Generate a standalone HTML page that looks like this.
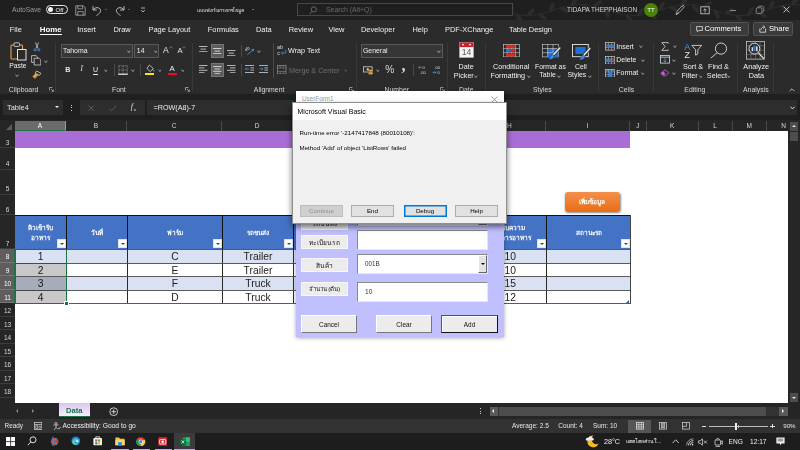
<!DOCTYPE html>
<html lang="th">
<head>
<meta charset="utf-8">
<title>Excel - Microsoft Visual Basic</title>
<style>
*{box-sizing:border-box;margin:0;padding:0}
html,body{width:800px;height:450px;overflow:hidden;background:#1f1f1f}
body{position:relative;font-family:"Liberation Sans","Noto Sans CJK SC",sans-serif;font-size:7px;color:#fff;line-height:1}
.a{position:absolute;white-space:nowrap}
.c{text-align:center}
/* ---------- title bar ---------- */
#title{left:0;top:0;width:800px;height:20px;background:#1f1f1f}
#tabs{left:0;top:20px;width:800px;height:18px;background:#2b2b2b}
#ribbon{left:0;top:38px;width:800px;height:56px;background:#2b2b2b}
#fbar{left:0;top:94px;width:800px;height:26px;background:#1f1f1f}
.fbox{background:#2d2d2d;top:100px;height:15px}
/* ---------- grid ---------- */
#colhdr{left:0;top:120px;width:800px;height:11px;background:#262626}
#rowhdr{left:0;top:131px;width:15px;height:272px;background:#262626}
#sheet{left:15px;top:131px;width:773px;height:272px;background:#fff}
.ch{top:121.2px;height:9.6px;font-size:6.5px;color:#d6d6d6;text-align:center;line-height:9px;border-right:1px solid #4a4a4a}
.rh{left:0;width:15px;font-size:6.5px;color:#d6d6d6;text-align:center;border-bottom:1px solid #3c3c3c}
/* ---------- table ---------- */
.th{background:#4472c4;top:215px;height:34px;border-left:1px solid #111;border-top:1px solid #111;color:#fff;font-weight:bold;font-size:6.5px;text-align:center;overflow:hidden}
.dd{position:absolute;right:0.5px;bottom:1.2px;width:9px;height:9.2px;background:#fbfbfb;border:0.5px solid #e2e2e2}
.dd:after{content:"";position:absolute;left:2px;top:3.2px;border-left:2.2px solid transparent;border-right:2.2px solid transparent;border-top:2.5px solid #444}
.td{color:#222;font-size:10.3px;text-align:center;border-left:1px solid #2a2a2a;border-top:1px solid #5a5a5a;height:14px;line-height:13px}
.bl{background:#d9e1f2}
.wh{background:#fff}
/* ---------- status ---------- */
#sheettabs{left:0;top:403px;width:800px;height:16px;background:#252525}
#status{left:0;top:419px;width:800px;height:13.5px;background:#323232}
#taskbar{left:0;top:432.5px;width:800px;height:17.5px;background:#1d1d1d}
/* ---------- dialogs ---------- */
.lbl{background:#ececec;left:301px;width:47px;height:14px;overflow:hidden;color:#111;font-size:6.6px;text-align:center;line-height:13px;border:1px solid #f8f8f8}
.tb{background:#fff;left:357px;width:131px;border:1px solid #8a8a8a;border-right-color:#e8e8e8;border-bottom-color:#e8e8e8;color:#333;font-size:6px}
.fb{background:#ececec;top:314.5px;height:18.5px;color:#111;font-size:6.4px;text-align:center;line-height:18.5px;border:1px solid #fff;border-right-color:#777;border-bottom-color:#777}
.mb{top:205px;height:12px;width:43px;background:#e1e1e1;border:1px solid #adadad;color:#000;font-size:6.2px;text-align:center;line-height:10px}
</style>
</head>
<body>
<!-- ================= TITLE BAR ================= -->
<div id="title" class="a"></div>
<div id="tabs" class="a"></div>
<div id="ribbon" class="a"></div>
<div id="fbar" class="a"></div>

<!-- title + tabs content -->
<svg class="a" style="left:500px;top:0px" width="300" height="20" viewBox="0 0 300 20"><g fill="#2c2c2c" stroke="none"><path d="M0 10.0 L4 11.3 L8 12.5 L12 13.6 L16 14.4 L20 15.1 L24 15.4 L28 15.5 L32 15.2 L36 14.7 L40 13.9 L44 12.9 L48 11.7 L52 10.5 L56 9.2 L60 7.9 L64 6.8 L68 5.8 L72 5.1 L76 4.7 L80 4.5 L84 4.6 L88 5.1 L92 5.8 L96 6.7 L100 7.9 L104 9.1 L108 10.4 L112 11.7 L116 12.8 L120 13.9 L124 14.7 L128 15.2 L132 15.5 L136 15.4 L140 15.1 L144 14.5 L148 13.6 L152 12.6 L156 11.4 L160 10.1 L164 8.8 L168 7.6 L172 6.5 L176 5.6 L180 5.0 L184 4.6 L188 4.5 L192 4.7 L196 5.3 L200 6.0 L204 7.0 L208 8.2 L212 9.5 L216 10.8 L220 12.0 L224 13.2 L228 14.1 L232 14.9 L236 15.3 L240 15.5 L244 15.4 L248 14.9 L252 14.3 L256 13.3 L260 12.2 L264 11.0 L268 9.7 L272 8.4 L276 7.2 L280 6.2 L284 5.4 L288 4.8 L292 4.5 L296 4.5 L300 4.9" fill="none" stroke="#2c2c2c" stroke-width="1.1"/><ellipse cx="9.6" cy="9.7" rx="5" ry="2.1" transform="rotate(-31 9.6 9.7)"/><ellipse cx="19.2" cy="18.2" rx="5" ry="2.1" transform="rotate(58 19.2 18.2)"/><ellipse cx="30.7" cy="12.3" rx="5" ry="2.1" transform="rotate(-49 30.7 12.3)"/><ellipse cx="42.4" cy="16.6" rx="5" ry="2.1" transform="rotate(36 42.4 16.6)"/><ellipse cx="51.7" cy="7.3" rx="5" ry="2.1" transform="rotate(-66 51.7 7.3)"/><ellipse cx="64.6" cy="9.8" rx="5" ry="2.1" transform="rotate(32 64.6 9.8)"/><ellipse cx="74.3" cy="1.6" rx="5" ry="2.1" transform="rotate(-56 74.3 1.6)"/><ellipse cx="85.6" cy="7.8" rx="5" ry="2.1" transform="rotate(51 85.6 7.8)"/><ellipse cx="97.5" cy="3.8" rx="5" ry="2.1" transform="rotate(-35 97.5 3.8)"/><ellipse cx="106.7" cy="13.2" rx="5" ry="2.1" transform="rotate(66 106.7 13.2)"/><ellipse cx="119.5" cy="10.6" rx="5" ry="2.1" transform="rotate(-32 119.5 10.6)"/><ellipse cx="129.4" cy="18.5" rx="5" ry="2.1" transform="rotate(55 129.4 18.5)"/><ellipse cx="140.5" cy="12.0" rx="5" ry="2.1" transform="rotate(-53 140.5 12.0)"/><ellipse cx="152.5" cy="15.7" rx="5" ry="2.1" transform="rotate(34 152.5 15.7)"/><ellipse cx="161.7" cy="6.2" rx="5" ry="2.1" transform="rotate(-66 161.7 6.2)"/><ellipse cx="174.5" cy="9.1" rx="5" ry="2.1" transform="rotate(33 174.5 9.1)"/><ellipse cx="184.5" cy="1.4" rx="5" ry="2.1" transform="rotate(-53 184.5 1.4)"/><ellipse cx="195.4" cy="8.3" rx="5" ry="2.1" transform="rotate(54 195.4 8.3)"/><ellipse cx="207.5" cy="4.8" rx="5" ry="2.1" transform="rotate(-33 207.5 4.8)"/><ellipse cx="216.7" cy="14.3" rx="5" ry="2.1" transform="rotate(66 216.7 14.3)"/><ellipse cx="229.5" cy="11.3" rx="5" ry="2.1" transform="rotate(-34 229.5 11.3)"/><ellipse cx="239.6" cy="18.7" rx="5" ry="2.1" transform="rotate(52 239.6 18.7)"/><ellipse cx="250.3" cy="11.5" rx="5" ry="2.1" transform="rotate(-56 250.3 11.5)"/><ellipse cx="262.6" cy="14.7" rx="5" ry="2.1" transform="rotate(32 262.6 14.7)"/><ellipse cx="271.7" cy="5.2" rx="5" ry="2.1" transform="rotate(-66 271.7 5.2)"/><ellipse cx="284.4" cy="8.4" rx="5" ry="2.1" transform="rotate(36 284.4 8.4)"/><ellipse cx="294.7" cy="1.3" rx="5" ry="2.1" transform="rotate(-50 294.7 1.3)"/></g></svg>
<div class="a" style="left:12.0px;top:7.25px;font-size:6.7px;color:#9d9d9d;">AutoSave</div>
<div class="a" style="left:45.5px;top:5.2px;width:22.5px;height:8.8px;border:1px solid #e8e8e8;border-radius:4.4px"></div>
<div class="a" style="left:47.6px;top:7px;width:5.2px;height:5.2px;border-radius:2.6px;background:#f4f4f4"></div>
<div class="a" style="left:55.5px;top:7.02px;font-size:6.0px;color:#f0f0f0;">Off</div>
<svg class="a" style="left:75px;top:4.8px" width="11" height="11" viewBox="0 0 11 11"><path d="M0.8 0.8H8.4L10.2 2.6V10.2H0.8Z" fill="none" stroke="#c4c4c4" stroke-width="0.7"/><path d="M2.8 0.8V3.8H7.6V0.8M2.8 10.2V6.6H8.2V10.2" fill="none" stroke="#c4c4c4" stroke-width="0.65"/></svg>
<svg class="a" style="left:92.0px;top:4.5px" width="10" height="11" viewBox="0 0 10 11"><path d="M1 1.2V5H4.8" fill="none" stroke="#cfcfcf" stroke-width="0.9"/><path d="M1.2 4.8C3 2 7 2 8.3 4.5C9.3 6.8 7.5 8.5 4.5 10.5" fill="none" stroke="#cfcfcf" stroke-width="0.9"/></svg>
<div class="a" style="left:105.1px;top:9.2px;width:0;height:0;border-left:1.6px solid transparent;border-right:1.6px solid transparent;border-top:1.8px solid #9a9a9a"></div>
<svg class="a" style="left:115.0px;top:4.5px" width="10" height="11" viewBox="0 0 10 11"><path d="M9 1.2V5H5.2" fill="none" stroke="#cfcfcf" stroke-width="0.9"/><path d="M8.8 4.8C7 2 3 2 1.7 4.5C0.7 6.8 2.5 8.5 5.5 10.5" fill="none" stroke="#cfcfcf" stroke-width="0.9"/></svg>
<div class="a" style="left:128.0px;top:9.2px;width:0;height:0;border-left:1.6px solid transparent;border-right:1.6px solid transparent;border-top:1.8px solid #9a9a9a"></div>
<svg class="a" style="left:139.5px;top:6.6px" width="6" height="6" viewBox="0 0 6 6"><path d="M1 1H5" stroke="#cfcfcf" stroke-width="0.8"/><path d="M1.2 3L3 5L4.8 3" stroke="#cfcfcf" stroke-width="0.8" fill="none"/></svg>
<div class="a c" style="left:189px;top:6.4px;width:62px;height:8px;overflow:hidden;font-size:5.2px;line-height:8px;color:#e0e0e0">แบบฟอร์มกรอกข้อมูล</div>
<div class="a" style="left:252.2px;top:9.2px;width:0;height:0;border-left:1.6px solid transparent;border-right:1.6px solid transparent;border-top:1.8px solid #bdbdbd"></div>
<div class="a" style="left:297px;top:3.4px;width:216px;height:13px;border:1px solid #484848;background:#1f1f1f"></div>
<svg class="a" style="left:309.0px;top:5.5px" width="8" height="9" viewBox="0 0 8 9"><circle cx="4.8" cy="3.4" r="2.6" fill="none" stroke="#7a7a7a" stroke-width="0.8"/><path d="M3 5.4L0.6 8.2" stroke="#7a7a7a" stroke-width="0.8"/></svg>
<div class="a" style="left:326.0px;top:6.74px;font-size:6.9px;color:#6a6a6a;">Search (Alt+Q)</div>
<div class="a" style="left:567.0px;top:6.98px;font-size:6.45px;color:#d4d4d4;">TIDAPA THEPPHAISON</div>
<div class="a c" style="left:644px;top:2.7px;width:14.2px;height:14.2px;border-radius:7.1px;background:#498205;color:#fff;font-size:6.2px;line-height:14.2px">TT</div>
<svg class="a" style="left:673.5px;top:4.0px" width="11" height="12" viewBox="0 0 11 12"><path d="M2 10.5L3.2 7.2L8 1.8L9.8 3.5L5 8.8Z" fill="none" stroke="#bdbdbd" stroke-width="0.8"/><path d="M2 10.5L5 8.8" stroke="#bdbdbd" stroke-width="0.8"/><path d="M8.6 0.6L10.8 2.6" stroke="#bdbdbd" stroke-width="0.7"/></svg>
<svg class="a" style="left:700.0px;top:5.5px" width="10" height="9" viewBox="0 0 10 9"><rect x="0.8" y="0.8" width="8.4" height="7" fill="none" stroke="#cfcfcf" stroke-width="0.8"/><path d="M5 6.5V3M3.4 4.4L5 2.8L6.6 4.4" stroke="#cfcfcf" stroke-width="0.8" fill="none"/></svg>
<div class="a" style="left:729.5px;top:9.6px;width:6.0px;height:0.8px;background:#8a8a8a;"></div>
<svg class="a" style="left:755.0px;top:5.0px" width="10" height="10" viewBox="0 0 10 10"><rect x="1.2" y="2.8" width="5.8" height="5.8" rx="1.2" fill="none" stroke="#9a9a9a" stroke-width="0.8"/><path d="M3 2.8C3 1.6 3.6 1.2 4.6 1.2H7.2C8.2 1.2 8.8 1.8 8.8 2.8V5.4C8.8 6.4 8.2 7 7 7" fill="none" stroke="#9a9a9a" stroke-width="0.8"/></svg>
<svg class="a" style="left:783.0px;top:6.3px" width="7" height="7" viewBox="0 0 7 7"><path d="M0.5 0.5L6.5 6.5M6.5 0.5L0.5 6.5" stroke="#e0e0e0" stroke-width="0.8"/></svg>
<div class="a" style="left:9.8px;top:25.95px;font-size:7.45px;color:#f0f0f0;">File</div>
<div class="a" style="left:77.3px;top:25.95px;font-size:7.45px;color:#f0f0f0;">Insert</div>
<div class="a" style="left:113.4px;top:25.95px;font-size:7.45px;color:#f0f0f0;">Draw</div>
<div class="a" style="left:148.5px;top:25.95px;font-size:7.45px;color:#f0f0f0;">Page Layout</div>
<div class="a" style="left:207.8px;top:25.95px;font-size:7.45px;color:#f0f0f0;">Formulas</div>
<div class="a" style="left:255.9px;top:25.95px;font-size:7.45px;color:#f0f0f0;">Data</div>
<div class="a" style="left:288.7px;top:25.95px;font-size:7.45px;color:#f0f0f0;">Review</div>
<div class="a" style="left:328.5px;top:25.95px;font-size:7.45px;color:#f0f0f0;">View</div>
<div class="a" style="left:361.0px;top:25.95px;font-size:7.45px;color:#f0f0f0;">Developer</div>
<div class="a" style="left:412.5px;top:25.95px;font-size:7.45px;color:#f0f0f0;">Help</div>
<div class="a" style="left:445.0px;top:25.95px;font-size:7.45px;color:#f0f0f0;">PDF-XChange</div>
<div class="a" style="left:509.0px;top:25.95px;font-size:7.45px;color:#f0f0f0;">Table Design</div>
<div class="a" style="left:39.8px;top:25.71px;font-size:7.9px;color:#fff;font-weight:bold;">Home</div>
<div class="a" style="left:39.8px;top:33.8px;width:22.0px;height:1.2px;background:#fff;"></div>
<div class="a" style="left:690px;top:22.3px;width:58.5px;height:13.5px;background:#3b3b3b;border:1px solid #545454;border-radius:1.5px"></div>
<svg class="a" style="left:695.5px;top:25.8px" width="7" height="7" viewBox="0 0 7 7"><path d="M0.6 0.6H6.4V4.4H3L1.6 5.8V4.4H0.6Z" fill="none" stroke="#e6e6e6" stroke-width="0.8"/></svg>
<div class="a" style="left:704.5px;top:25.17px;font-size:7.6px;color:#fff;">Comments</div>
<div class="a" style="left:753px;top:22.3px;width:40px;height:13.5px;background:#3b3b3b;border:1px solid #545454;border-radius:1.5px"></div>
<svg class="a" style="left:758.5px;top:25.3px" width="8" height="8" viewBox="0 0 8 8"><path d="M0.8 3.6V7.2H6.6V3.6" fill="none" stroke="#e6e6e6" stroke-width="0.8"/><path d="M2 4.8C2.4 2.8 3.6 2 5.4 2M4.2 0.6L5.8 2L4.2 3.4" fill="none" stroke="#e6e6e6" stroke-width="0.8"/></svg>
<div class="a" style="left:769.0px;top:25.17px;font-size:7.6px;color:#fff;">Share</div>
<!-- ribbon: clipboard/font/alignment -->
<svg class="a" style="left:9.5px;top:42.0px" width="17" height="19" viewBox="0 0 17 19"><rect x="1" y="3" width="11.5" height="14" rx="0.8" fill="none" stroke="#e3a04a" stroke-width="1.1"/>
<rect x="4" y="0.8" width="5.5" height="3.6" rx="0.8" fill="#2b2b2b" stroke="#d0d0d0" stroke-width="0.9"/>
<rect x="7.5" y="7.5" width="8.5" height="10.5" fill="#2b2b2b" stroke="#e6e6e6" stroke-width="1"/></svg>
<div class="a" style="left:9.3px;top:63.38px;font-size:6.75px;color:#f0f0f0;">Paste</div>
<svg class="a" style="left:14.7px;top:73.7px" width="4" height="3.4" viewBox="0 0 4 3.4"><path d="M0.5 0.6L2.0 2.6L3.5 0.6" stroke="#c8c8c8" stroke-width="0.7" fill="none"/></svg>
<svg class="a" style="left:32.5px;top:42px" width="8" height="10" viewBox="0 0 8 10"><path d="M2.4 0.4L5 6.4M5.6 0.4L3 6.4" stroke="#d8d8d8" stroke-width="0.75" fill="none"/><circle cx="2.2" cy="7.8" r="1.1" fill="none" stroke="#4a9be8" stroke-width="0.8"/><circle cx="5.8" cy="7.8" r="1.1" fill="none" stroke="#4a9be8" stroke-width="0.8"/></svg>
<svg class="a" style="left:30.8px;top:55.0px" width="10.5" height="10.5" viewBox="0 0 10.5 10.5"><path d="M0.6 0.6H5L6.5 2V7.4H0.6Z" fill="none" stroke="#d0d0d0" stroke-width="0.8"/><path d="M3.2 3.2H8L9.8 5V10H3.2Z" fill="#2b2b2b" stroke="#d0d0d0" stroke-width="0.8"/></svg>
<svg class="a" style="left:44.1px;top:59.5px" width="3.8" height="3.4" viewBox="0 0 3.8 3.4"><path d="M0.5 0.6L1.9 2.6L3.3 0.6" stroke="#c8c8c8" stroke-width="0.7" fill="none"/></svg>
<svg class="a" style="left:31.5px;top:70.0px" width="10" height="9" viewBox="0 0 10 9"><path d="M4.5 1L8.8 3.2L7.4 5.4L3.2 3.2Z" fill="none" stroke="#d8d8d8" stroke-width="0.8"/><path d="M3.6 3.6L0.8 6.4L3 8.4L6 5" fill="#e3a04a" stroke="#e3a04a" stroke-width="0.6"/></svg>
<div class="a" style="left:8.8px;top:86.54px;font-size:6.9px;color:#d8d8d8;">Clipboard</div>
<svg class="a" style="left:49.2px;top:86.8px" width="5" height="5" viewBox="0 0 5 5"><path d="M0.5 3.5V0.5H3.5" fill="none" stroke="#bdbdbd" stroke-width="0.7"/><path d="M2 2L4.2 4.2M4.4 2.6V4.4H2.6" fill="none" stroke="#bdbdbd" stroke-width="0.7"/></svg>
<div class="a" style="left:55.0px;top:43px;width:1px;height:49px;background:#383838"></div>
<div class="a" style="left:61.0px;top:44.2px;width:71.5px;height:13.6px;background:#363636;border:1px solid #5a5a5a"></div>
<div class="a" style="left:63.0px;top:48.24px;font-size:6.9px;color:#f0f0f0;">Tahoma</div>
<svg class="a" style="left:127.1px;top:49.9px" width="3.8" height="3.4" viewBox="0 0 3.8 3.4"><path d="M0.5 0.6L1.9 2.6L3.3 0.6" stroke="#c8c8c8" stroke-width="0.7" fill="none"/></svg>
<div class="a" style="left:134.0px;top:44.2px;width:25.0px;height:13.6px;background:#363636;border:1px solid #5a5a5a"></div>
<div class="a" style="left:136.8px;top:48.24px;font-size:6.9px;color:#f0f0f0;">14</div>
<svg class="a" style="left:153.6px;top:49.9px" width="3.8" height="3.4" viewBox="0 0 3.8 3.4"><path d="M0.5 0.6L1.9 2.6L3.3 0.6" stroke="#c8c8c8" stroke-width="0.7" fill="none"/></svg>
<div class="a" style="left:163.0px;top:46.44px;font-size:8.6px;color:#e6e6e6;">A</div>
<svg class="a" style="left:169.0px;top:46.0px" width="4" height="3" viewBox="0 0 4 3"><path d="M0.4 2.4L2 0.7L3.6 2.4" fill="none" stroke="#4a9be8" stroke-width="0.7"/></svg>
<div class="a" style="left:177.5px;top:47.47px;font-size:7.6px;color:#e6e6e6;">A</div>
<svg class="a" style="left:182.2px;top:46.0px" width="4" height="3" viewBox="0 0 4 3"><path d="M0.4 0.6L2 2.3L3.6 0.6" fill="none" stroke="#4a9be8" stroke-width="0.7"/></svg>
<div class="a" style="left:65.3px;top:65.78px;font-size:7.2px;color:#e6e6e6;font-weight:bold;">B</div>
<div class="a" style="left:80.6px;top:65.78px;font-size:7.2px;color:#e6e6e6;font-style:italic;font-family:'Liberation Serif',serif">I</div>
<div class="a" style="left:93.0px;top:65.69px;font-size:7.0px;color:#e6e6e6;">U</div>
<div class="a" style="left:93.0px;top:73.6px;width:5.0px;height:0.6px;background:#e6e6e6;"></div>
<svg class="a" style="left:103.6px;top:68.7px" width="3.8" height="3.4" viewBox="0 0 3.8 3.4"><path d="M0.5 0.6L1.9 2.6L3.3 0.6" stroke="#c8c8c8" stroke-width="0.7" fill="none"/></svg>
<div class="a" style="left:114.0px;top:63.5px;width:1px;height:12.5px;background:#4a4a4a"></div>
<svg class="a" style="left:117.5px;top:64.5px" width="10" height="10" viewBox="0 0 10 10"><path d="M0.8 0.8H9.2M0.8 0.8V9.2M9.2 0.8V9.2M5 0.8V9.2M0.8 5H9.2" stroke="#b0b0b0" stroke-width="0.6" stroke-dasharray="1.2 0.7" fill="none"/><path d="M0.3 9.2H9.7" stroke="#f4f4f4" stroke-width="1.2"/></svg>
<svg class="a" style="left:130.9px;top:68.7px" width="3.8" height="3.4" viewBox="0 0 3.8 3.4"><path d="M0.5 0.6L1.9 2.6L3.3 0.6" stroke="#c8c8c8" stroke-width="0.7" fill="none"/></svg>
<div class="a" style="left:140.0px;top:63.5px;width:1px;height:12.5px;background:#4a4a4a"></div>
<svg class="a" style="left:145.5px;top:63.5px" width="9" height="9" viewBox="0 0 9 9"><path d="M3.4 1L7.4 4.6L4.2 7.6L0.9 4.4Z" fill="none" stroke="#d8d8d8" stroke-width="0.8"/><path d="M7.6 5.2C8.6 6.4 8.6 7.2 7.8 7.6C7 7.2 7 6.4 7.6 5.2Z" fill="#4a9be8"/></svg>
<div class="a" style="left:145.0px;top:72.6px;width:9.0px;height:2.0px;background:#ffe600;"></div>
<svg class="a" style="left:157.7px;top:68.7px" width="3.8" height="3.4" viewBox="0 0 3.8 3.4"><path d="M0.5 0.6L1.9 2.6L3.3 0.6" stroke="#c8c8c8" stroke-width="0.7" fill="none"/></svg>
<div class="a" style="left:169.4px;top:64.55px;font-size:7.8px;color:#f0f0f0;">A</div>
<div class="a" style="left:167.5px;top:72.6px;width:9.5px;height:2.0px;background:#e81123;"></div>
<svg class="a" style="left:180.7px;top:68.7px" width="3.8" height="3.4" viewBox="0 0 3.8 3.4"><path d="M0.5 0.6L1.9 2.6L3.3 0.6" stroke="#c8c8c8" stroke-width="0.7" fill="none"/></svg>
<div class="a" style="left:112.0px;top:86.54px;font-size:6.9px;color:#d8d8d8;">Font</div>
<svg class="a" style="left:185.4px;top:86.8px" width="5" height="5" viewBox="0 0 5 5"><path d="M0.5 3.5V0.5H3.5" fill="none" stroke="#bdbdbd" stroke-width="0.7"/><path d="M2 2L4.2 4.2M4.4 2.6V4.4H2.6" fill="none" stroke="#bdbdbd" stroke-width="0.7"/></svg>
<div class="a" style="left:192.0px;top:43px;width:1px;height:49px;background:#383838"></div>
<svg class="a" style="left:199.0px;top:45.8px" width="8.5" height="6.2" viewBox="0 0 8.5 6.2"><path d="M0.0 0.5H8.5" stroke="#dcdcdc" stroke-width="0.8"/><path d="M1.5 3.1H7.0" stroke="#dcdcdc" stroke-width="0.8"/><path d="M0.0 5.7H8.5" stroke="#dcdcdc" stroke-width="0.8"/></svg>
<div class="a" style="left:211.0px;top:44.0px;width:12.8px;height:13.5px;background:#5c5c5c;border:1px solid #777"></div>
<svg class="a" style="left:213.2px;top:48.0px" width="8.5" height="6.2" viewBox="0 0 8.5 6.2"><path d="M0.0 0.5H8.5" stroke="#f0f0f0" stroke-width="0.8"/><path d="M1.5 3.1H7.0" stroke="#f0f0f0" stroke-width="0.8"/><path d="M0.0 5.7H8.5" stroke="#f0f0f0" stroke-width="0.8"/></svg>
<svg class="a" style="left:227.0px;top:50.2px" width="8.5" height="6.2" viewBox="0 0 8.5 6.2"><path d="M0.0 0.5H8.5" stroke="#dcdcdc" stroke-width="0.8"/><path d="M1.5 3.1H7.0" stroke="#dcdcdc" stroke-width="0.8"/><path d="M0.0 5.7H8.5" stroke="#dcdcdc" stroke-width="0.8"/></svg>
<div class="a" style="left:240.7px;top:44.5px;width:1px;height:12.5px;background:#4a4a4a"></div>
<svg class="a" style="left:245.0px;top:45.5px" width="10" height="10" viewBox="0 0 10 10"><text x="0.2" y="4.6" font-size="4.6" fill="#d8d8d8" font-family="Liberation Sans, sans-serif" transform="rotate(-35 2 4)">ab</text><path d="M2.4 8.6L8.6 3.4M8.6 3.4L6.6 3.5M8.6 3.4L8.3 5.4" stroke="#4a9be8" stroke-width="0.8" fill="none"/></svg>
<svg class="a" style="left:256.9px;top:49.9px" width="3.8" height="3.4" viewBox="0 0 3.8 3.4"><path d="M0.5 0.6L1.9 2.6L3.3 0.6" stroke="#c8c8c8" stroke-width="0.7" fill="none"/></svg>
<div class="a" style="left:272.5px;top:43px;width:1px;height:35px;background:#4a4a4a"></div>
<svg class="a" style="left:277.3px;top:45.2px" width="10" height="11" viewBox="0 0 10 11"><text x="0" y="4.4" font-size="5.4" fill="#dcdcdc" font-family="Liberation Sans, sans-serif">ab</text><text x="0.3" y="9.8" font-size="5.4" fill="#dcdcdc" font-family="Liberation Sans, sans-serif">c</text><path d="M8.8 4.6V8H4.4M5.8 6.6L4.4 8L5.8 9.4" stroke="#3f97ea" stroke-width="0.8" fill="none"/></svg>
<div class="a" style="left:288.0px;top:47.38px;font-size:7.2px;color:#f0f0f0;">Wrap Text</div>
<svg class="a" style="left:199.0px;top:65.2px" width="8.5" height="8.2" viewBox="0 0 8.5 8.2"><path d="M0.0 0.5H8.5" stroke="#dcdcdc" stroke-width="0.8"/><path d="M0.0 2.9H5.5" stroke="#dcdcdc" stroke-width="0.8"/><path d="M0.0 5.3H8.5" stroke="#dcdcdc" stroke-width="0.8"/><path d="M0.0 7.7H5.5" stroke="#dcdcdc" stroke-width="0.8"/></svg>
<div class="a" style="left:211.0px;top:63.0px;width:12.8px;height:13.8px;background:#5c5c5c;border:1px solid #777"></div>
<svg class="a" style="left:213.2px;top:65.6px" width="8.5" height="8.2" viewBox="0 0 8.5 8.2"><path d="M0.0 0.5H8.5" stroke="#f0f0f0" stroke-width="0.8"/><path d="M1.5 2.9H7.0" stroke="#f0f0f0" stroke-width="0.8"/><path d="M0.0 5.3H8.5" stroke="#f0f0f0" stroke-width="0.8"/><path d="M1.5 7.7H7.0" stroke="#f0f0f0" stroke-width="0.8"/></svg>
<svg class="a" style="left:227.0px;top:65.2px" width="8.5" height="8.2" viewBox="0 0 8.5 8.2"><path d="M0.0 0.5H8.5" stroke="#dcdcdc" stroke-width="0.8"/><path d="M3.0 2.9H8.5" stroke="#dcdcdc" stroke-width="0.8"/><path d="M0.0 5.3H8.5" stroke="#dcdcdc" stroke-width="0.8"/><path d="M3.0 7.7H8.5" stroke="#dcdcdc" stroke-width="0.8"/></svg>
<div class="a" style="left:240.7px;top:63.5px;width:1px;height:12.5px;background:#4a4a4a"></div>
<svg class="a" style="left:245.0px;top:65.3px" width="9.5" height="8" viewBox="0 0 9.5 8"><path d="M0 0.5H9M5.4 2.9H9M5.4 5.1H9M0 7.5H9" stroke="#dcdcdc" stroke-width="0.75"/><path d="M4.2 4H0.5M1.9 2.6L0.5 4L1.9 5.4" stroke="#3f97ea" stroke-width="0.75" fill="none"/></svg>
<svg class="a" style="left:259.0px;top:65.3px" width="9.5" height="8" viewBox="0 0 9.5 8"><path d="M0 0.5H9M5.4 2.9H9M5.4 5.1H9M0 7.5H9" stroke="#dcdcdc" stroke-width="0.75"/><path d="M0.3 4H4M2.6 2.6L4 4L2.6 5.4" stroke="#3f97ea" stroke-width="0.75" fill="none"/></svg>
<svg class="a" style="left:277.0px;top:64.8px" width="9.5" height="9.5" viewBox="0 0 9.5 9.5"><rect x="0.5" y="0.5" width="8.5" height="8.5" fill="none" stroke="#8a8a8a" stroke-width="0.8"/><path d="M0.5 3H9M0.5 6.4H9M3.2 0.5V3M6.2 0.5V3M3.2 6.4V9M6.2 6.4V9" stroke="#8a8a8a" stroke-width="0.6"/></svg>
<div class="a" style="left:289.0px;top:67.08px;font-size:7.2px;color:#6f6f6f;">Merge &amp; Center</div>
<svg class="a" style="left:343.7px;top:68.9px" width="3.8" height="3.4" viewBox="0 0 3.8 3.4"><path d="M0.5 0.6L1.9 2.6L3.3 0.6" stroke="#6a6a6a" stroke-width="0.7" fill="none"/></svg>
<div class="a" style="left:253.8px;top:86.54px;font-size:6.9px;color:#d8d8d8;">Alignment</div>
<svg class="a" style="left:349.2px;top:86.8px" width="5" height="5" viewBox="0 0 5 5"><path d="M0.5 3.5V0.5H3.5" fill="none" stroke="#bdbdbd" stroke-width="0.7"/><path d="M2 2L4.2 4.2M4.4 2.6V4.4H2.6" fill="none" stroke="#bdbdbd" stroke-width="0.7"/></svg>
<div class="a" style="left:355.5px;top:43px;width:1px;height:49px;background:#383838"></div>
<!-- ribbon: number/date/styles/cells/editing/analysis -->
<div class="a" style="left:360.8px;top:44.2px;width:82.2px;height:13.6px;background:#363636;border:1px solid #5a5a5a"></div>
<div class="a" style="left:363.0px;top:48.24px;font-size:6.9px;color:#f0f0f0;">General</div>
<svg class="a" style="left:437.1px;top:49.9px" width="3.8" height="3.4" viewBox="0 0 3.8 3.4"><path d="M0.5 0.6L1.9 2.6L3.3 0.6" stroke="#c8c8c8" stroke-width="0.7" fill="none"/></svg>
<svg class="a" style="left:362.5px;top:65.5px" width="11" height="9.5" viewBox="0 0 11 9.5"><rect x="0.5" y="0.8" width="8.6" height="5.2" fill="none" stroke="#d0d0d0" stroke-width="0.8"/><circle cx="4.8" cy="3.4" r="1.2" fill="#d0d0d0"/>
<ellipse cx="7.6" cy="7.4" rx="2.4" ry="1" fill="#e8b33a"/><ellipse cx="7.6" cy="6" rx="2.4" ry="1" fill="#e8b33a" stroke="#2b2b2b" stroke-width="0.3"/><ellipse cx="7.6" cy="4.6" rx="2.4" ry="1" fill="#e8b33a" stroke="#2b2b2b" stroke-width="0.3"/></svg>
<svg class="a" style="left:375.7px;top:68.7px" width="3.8" height="3.4" viewBox="0 0 3.8 3.4"><path d="M0.5 0.6L1.9 2.6L3.3 0.6" stroke="#c8c8c8" stroke-width="0.7" fill="none"/></svg>
<div class="a" style="left:385.2px;top:64.60px;font-size:10.2px;color:#dcdcdc;">%</div>
<div class="a" style="left:401.4px;top:58.40px;font-size:16.0px;color:#dcdcdc;font-weight:bold;font-family:'Liberation Serif',serif">,</div>
<div class="a" style="left:412.5px;top:63.5px;width:1px;height:12.5px;background:#4a4a4a"></div>
<svg class="a" style="left:417.5px;top:65.0px" width="9.5" height="10" viewBox="0 0 9.5 10"><text x="4.6" y="3.8" font-size="4" fill="#d8d8d8" font-family="Liberation Sans, sans-serif">0</text><text x="2.2" y="9" font-size="4" fill="#d8d8d8" font-family="Liberation Sans, sans-serif">.00</text><path d="M3.6 2.4H0.6M1.8 1.2L0.6 2.4L1.8 3.6" stroke="#4a9be8" stroke-width="0.8" fill="none"/></svg>
<svg class="a" style="left:432.0px;top:65.0px" width="9.5" height="10" viewBox="0 0 9.5 10"><text x="2.4" y="3.8" font-size="4" fill="#d8d8d8" font-family="Liberation Sans, sans-serif">.00</text><text x="5.4" y="9" font-size="4" fill="#d8d8d8" font-family="Liberation Sans, sans-serif">0</text><path d="M0.6 7.4H3.8M2.6 6.2L3.8 7.4L2.6 8.6" stroke="#4a9be8" stroke-width="0.8" fill="none"/></svg>
<div class="a" style="left:384.5px;top:86.54px;font-size:6.9px;color:#d8d8d8;">Number</div>
<svg class="a" style="left:440.2px;top:86.8px" width="5" height="5" viewBox="0 0 5 5"><path d="M0.5 3.5V0.5H3.5" fill="none" stroke="#bdbdbd" stroke-width="0.7"/><path d="M2 2L4.2 4.2M4.4 2.6V4.4H2.6" fill="none" stroke="#bdbdbd" stroke-width="0.7"/></svg>
<div class="a" style="left:447.0px;top:43px;width:1px;height:49px;background:#383838"></div>
<svg class="a" style="left:458.6px;top:41.6px" width="15" height="16" viewBox="0 0 15 16"><rect x="0.5" y="0.5" width="14" height="15" fill="#f4f4f4" stroke="#bbb" stroke-width="0.5"/><rect x="0.5" y="0.5" width="14" height="4.6" fill="#c8232c"/><circle cx="4" cy="2.6" r="0.9" fill="#fff"/><circle cx="11" cy="2.6" r="0.9" fill="#fff"/><text x="7.5" y="13.4" font-size="8.6" text-anchor="middle" fill="#555" font-family="Liberation Sans, sans-serif">14</text></svg>
<div class="a c" style="left:426.2px;width:80px;top:63.18px;font-size:7.2px;color:#f0f0f0;">Date</div>
<div class="a" style="left:453.8px;top:71.68px;font-size:7.2px;color:#f0f0f0;">Picker</div>
<svg class="a" style="left:474.4px;top:74.5px" width="3.8" height="3.4" viewBox="0 0 3.8 3.4"><path d="M0.5 0.6L1.9 2.6L3.3 0.6" stroke="#c8c8c8" stroke-width="0.7" fill="none"/></svg>
<div class="a" style="left:459.0px;top:86.54px;font-size:6.9px;color:#d8d8d8;">Date</div>
<div class="a" style="left:485.0px;top:43px;width:1px;height:49px;background:#383838"></div>
<svg class="a" style="left:503.2px;top:44px" width="17" height="13.2" viewBox="0 0 17 13.2"><rect x="0.3" y="0.3" width="16.4" height="12.6" fill="#2b2b2b" stroke="#d6d6d6" stroke-width="0.6"/><path d="M0.3 4.5H16.7M0.3 8.7H16.7M4.4 0.3V12.9M8.5 0.3V12.9M12.6 0.3V12.9" stroke="#d6d6d6" stroke-width="0.55"/><rect x="3" y="0.9" width="8.8" height="3.2" fill="#e0271d"/><rect x="3" y="5" width="4.4" height="3.2" fill="#2272d9"/><rect x="7.4" y="5" width="4.4" height="3.2" fill="#e0271d"/><rect x="3" y="9.2" width="8.8" height="3.2" fill="#e0271d"/></svg>
<div class="a" style="left:493.0px;top:63.16px;font-size:7.25px;color:#f0f0f0;">Conditional</div>
<div class="a" style="left:490.5px;top:71.66px;font-size:7.25px;color:#f0f0f0;">Formatting</div>
<svg class="a" style="left:526.9px;top:74.5px" width="3.8" height="3.4" viewBox="0 0 3.8 3.4"><path d="M0.5 0.6L1.9 2.6L3.3 0.6" stroke="#c8c8c8" stroke-width="0.7" fill="none"/></svg>
<svg class="a" style="left:541.5px;top:43.8px" width="19" height="16.5" viewBox="0 0 19 16.5"><rect x="0.3" y="0.3" width="16" height="12.6" fill="#2b2b2b" stroke="#d6d6d6" stroke-width="0.6"/><rect x="5.6" y="4.5" width="10.7" height="8.4" fill="#1f6fd6"/><path d="M0.3 4.5H16.3M0.3 8.7H16.3M5.6 0.3V12.9M11 0.3V12.9" stroke="#d6d6d6" stroke-width="0.55"/><path d="M17.8 4L10.6 11.6" stroke="#2b2b2b" stroke-width="3"/><path d="M17.8 4L10.8 11.4" stroke="#e6e6e6" stroke-width="1.6" stroke-linecap="round"/><path d="M10.9 10.6C9.2 10.8 8.8 13.6 6.4 15C9.6 16 12.6 14.4 12.2 11.8Z" fill="#3a8eea" stroke="#2b2b2b" stroke-width="0.4"/></svg>
<div class="a" style="left:535.0px;top:63.76px;font-size:6.85px;color:#f0f0f0;">Format as</div>
<div class="a" style="left:539.3px;top:72.16px;font-size:6.9px;color:#f0f0f0;">Table</div>
<svg class="a" style="left:556.8px;top:74.5px" width="3.8" height="3.4" viewBox="0 0 3.8 3.4"><path d="M0.5 0.6L1.9 2.6L3.3 0.6" stroke="#c8c8c8" stroke-width="0.7" fill="none"/></svg>
<svg class="a" style="left:571.6px;top:43.8px" width="19" height="16.5" viewBox="0 0 19 16.5"><rect x="0.5" y="0.5" width="15.8" height="12.2" fill="#2b2b2b" stroke="#e6e6e6" stroke-width="0.9"/><rect x="3.4" y="3" width="10.2" height="7" fill="#1f6fd6"/><path d="M17.8 4.4L11.2 12" stroke="#2b2b2b" stroke-width="3"/><path d="M17.8 4.4L11.4 11.8" stroke="#e6e6e6" stroke-width="1.6" stroke-linecap="round"/><path d="M11.5 11C9.8 11.2 9.4 14 7 15.4C10.2 16.4 13.2 14.8 12.8 12.2Z" fill="#3a8eea" stroke="#2b2b2b" stroke-width="0.4"/></svg>
<div class="a" style="left:575.0px;top:63.76px;font-size:6.85px;color:#f0f0f0;">Cell</div>
<div class="a" style="left:567.5px;top:72.16px;font-size:6.9px;color:#f0f0f0;">Styles</div>
<svg class="a" style="left:587.9px;top:74.5px" width="3.8" height="3.4" viewBox="0 0 3.8 3.4"><path d="M0.5 0.6L1.9 2.6L3.3 0.6" stroke="#c8c8c8" stroke-width="0.7" fill="none"/></svg>
<div class="a" style="left:533.0px;top:86.54px;font-size:6.9px;color:#d8d8d8;">Styles</div>
<div class="a" style="left:598.0px;top:43px;width:1px;height:49px;background:#383838"></div>
<svg class="a" style="left:605.0px;top:42.0px" width="10" height="8.6" viewBox="0 0 10 8.6"><rect x="0.5" y="0.5" width="9" height="7.6" fill="none" stroke="#cfcfcf" stroke-width="0.7"/><path d="M0.5 3H9.5M0.5 5.6H9.5M3.4 0.5V8.1M6.6 0.5V8.1" stroke="#cfcfcf" stroke-width="0.5"/><rect x="3.4" y="3" width="6.1" height="2.6" fill="#2f7bd9"/><path d="M3 4.3H0.4M1.4 3.3L0.4 4.3L1.4 5.3" stroke="#4a9be8" stroke-width="0.7" fill="none"/></svg>
<div class="a" style="left:616.3px;top:43.34px;font-size:7.0px;color:#f0f0f0;">Insert</div>
<svg class="a" style="left:638.9px;top:45.3px" width="3.8" height="3.4" viewBox="0 0 3.8 3.4"><path d="M0.5 0.6L1.9 2.6L3.3 0.6" stroke="#c8c8c8" stroke-width="0.7" fill="none"/></svg>
<svg class="a" style="left:605.0px;top:55.5px" width="10" height="8.6" viewBox="0 0 10 8.6"><rect x="0.5" y="0.5" width="9" height="7.6" fill="none" stroke="#cfcfcf" stroke-width="0.7"/><path d="M0.5 3H9.5M0.5 5.6H9.5M3.4 0.5V8.1M6.6 0.5V8.1" stroke="#cfcfcf" stroke-width="0.5"/><rect x="0.5" y="3" width="6" height="2.6" fill="#2f7bd9"/><path d="M7 2.6L9.6 6M9.6 2.6L7 6" stroke="#e03c32" stroke-width="0.9"/></svg>
<div class="a" style="left:616.3px;top:57.14px;font-size:6.95px;color:#f0f0f0;">Delete</div>
<svg class="a" style="left:641.4px;top:58.7px" width="3.8" height="3.4" viewBox="0 0 3.8 3.4"><path d="M0.5 0.6L1.9 2.6L3.3 0.6" stroke="#c8c8c8" stroke-width="0.7" fill="none"/></svg>
<svg class="a" style="left:605.0px;top:68.8px" width="10" height="8.6" viewBox="0 0 10 8.6"><rect x="0.5" y="0.5" width="9" height="7.6" fill="none" stroke="#cfcfcf" stroke-width="0.7"/><path d="M0.5 3H9.5M0.5 5.6H9.5M3.4 0.5V8.1M6.6 0.5V8.1" stroke="#cfcfcf" stroke-width="0.5"/><rect x="3.4" y="3" width="3.2" height="5" fill="#2f7bd9"/><path d="M0.2 1.8H9.8" stroke="#4a9be8" stroke-width="0.9"/></svg>
<div class="a" style="left:616.3px;top:70.44px;font-size:6.95px;color:#f0f0f0;">Format</div>
<svg class="a" style="left:640.7px;top:72.0px" width="3.8" height="3.4" viewBox="0 0 3.8 3.4"><path d="M0.5 0.6L1.9 2.6L3.3 0.6" stroke="#c8c8c8" stroke-width="0.7" fill="none"/></svg>
<div class="a" style="left:618.8px;top:86.54px;font-size:6.9px;color:#d8d8d8;">Cells</div>
<div class="a" style="left:653.0px;top:43px;width:1px;height:49px;background:#383838"></div>
<svg class="a" style="left:660.5px;top:42.0px" width="8" height="9" viewBox="0 0 8 9"><path d="M7.2 1.6V0.6H0.8L4.2 4.5L0.8 8.4H7.2V7.4" fill="none" stroke="#dcdcdc" stroke-width="0.8"/></svg>
<svg class="a" style="left:673.1px;top:45.3px" width="3.8" height="3.4" viewBox="0 0 3.8 3.4"><path d="M0.5 0.6L1.9 2.6L3.3 0.6" stroke="#c8c8c8" stroke-width="0.7" fill="none"/></svg>
<svg class="a" style="left:660.0px;top:55.4px" width="10" height="8.6" viewBox="0 0 10 8.6"><rect x="0.5" y="0.5" width="9" height="7.6" fill="none" stroke="#dcdcdc" stroke-width="0.8"/><path d="M0.5 2.2H9.5" stroke="#dcdcdc" stroke-width="0.8"/><path d="M5 3.2V6.8M3.6 5.6L5 7L6.4 5.6" stroke="#4a9be8" stroke-width="0.8" fill="none"/></svg>
<svg class="a" style="left:672.1px;top:58.7px" width="3.8" height="3.4" viewBox="0 0 3.8 3.4"><path d="M0.5 0.6L1.9 2.6L3.3 0.6" stroke="#c8c8c8" stroke-width="0.7" fill="none"/></svg>
<svg class="a" style="left:660.0px;top:69.0px" width="9.5" height="8" viewBox="0 0 9.5 8"><path d="M3.4 6.8L0.8 4.4L5 0.8L8.6 3.8L5.6 6.8Z" fill="none" stroke="#c35fd0" stroke-width="0.9"/><path d="M3.2 6.6L1 4.4L3.2 2.6L5.6 4.8Z" fill="#c35fd0"/></svg>
<svg class="a" style="left:672.1px;top:72.0px" width="3.8" height="3.4" viewBox="0 0 3.8 3.4"><path d="M0.5 0.6L1.9 2.6L3.3 0.6" stroke="#c8c8c8" stroke-width="0.7" fill="none"/></svg>
<svg class="a" style="left:683.5px;top:42px" width="18.5" height="17" viewBox="0 0 18.5 17"><text x="0.2" y="8" font-size="9" fill="#3f97ea" font-family="Liberation Sans, sans-serif">A</text><text x="0.5" y="16" font-size="9" fill="#e6e6e6" font-family="Liberation Sans, sans-serif">Z</text><path d="M7.8 3.4H17.6L13.8 7.8V12L11.6 13.2V7.8Z" fill="none" stroke="#dcdcdc" stroke-width="0.85"/></svg>
<div class="a" style="left:683.0px;top:63.16px;font-size:7.25px;color:#f0f0f0;">Sort &amp;</div>
<div class="a" style="left:681.5px;top:71.66px;font-size:7.25px;color:#f0f0f0;">Filter</div>
<svg class="a" style="left:698.7px;top:74.5px" width="3.8" height="3.4" viewBox="0 0 3.8 3.4"><path d="M0.5 0.6L1.9 2.6L3.3 0.6" stroke="#c8c8c8" stroke-width="0.7" fill="none"/></svg>
<svg class="a" style="left:709.5px;top:42.0px" width="18" height="17" viewBox="0 0 18 17"><circle cx="11" cy="6.6" r="5.6" fill="none" stroke="#dcdcdc" stroke-width="0.9"/><path d="M7 10.8L0.8 16.2" stroke="#dcdcdc" stroke-width="0.9"/></svg>
<div class="a" style="left:708.0px;top:63.16px;font-size:7.25px;color:#f0f0f0;">Find &amp;</div>
<div class="a" style="left:706.8px;top:71.66px;font-size:7.25px;color:#f0f0f0;">Select</div>
<svg class="a" style="left:726.7px;top:74.5px" width="3.8" height="3.4" viewBox="0 0 3.8 3.4"><path d="M0.5 0.6L1.9 2.6L3.3 0.6" stroke="#c8c8c8" stroke-width="0.7" fill="none"/></svg>
<div class="a" style="left:684.3px;top:86.54px;font-size:6.9px;color:#d8d8d8;">Editing</div>
<div class="a" style="left:737.0px;top:43px;width:1px;height:49px;background:#383838"></div>
<svg class="a" style="left:746.0px;top:41.0px" width="19.5" height="19.5" viewBox="0 0 19.5 19.5"><rect x="0.5" y="0.5" width="18" height="17.6" fill="none" stroke="#dcdcdc" stroke-width="0.7"/><path d="M0.5 4.8H18.5M0.5 9.2H18.5M0.5 13.6H18.5M5 0.5V18M9.6 0.5V18M14 0.5V18" stroke="#8a8a8a" stroke-width="0.5"/>
<circle cx="8.4" cy="7.6" r="5.4" fill="#2b2b2b" stroke="#f0f0f0" stroke-width="0.9"/><rect x="5.6" y="6.2" width="1.6" height="4" fill="#dcdcdc"/><rect x="7.7" y="4.2" width="1.8" height="6" fill="#2f7bd9"/><rect x="10" y="5.4" width="1.6" height="4.8" fill="#dcdcdc"/><path d="M12.2 11.6L17.8 17.6" stroke="#f0f0f0" stroke-width="1.1"/></svg>
<div class="a" style="left:743.3px;top:63.16px;font-size:7.25px;color:#f0f0f0;">Analyze</div>
<div class="a" style="left:748.8px;top:71.66px;font-size:7.25px;color:#f0f0f0;">Data</div>
<div class="a" style="left:743.0px;top:86.54px;font-size:6.9px;color:#d8d8d8;">Analysis</div>
<div class="a" style="left:773.2px;top:43px;width:1px;height:49px;background:#383838"></div>
<svg class="a" style="left:789.0px;top:87.6px" width="6" height="4" viewBox="0 0 6 4"><path d="M0.6 3.2L3 0.8L5.4 3.2" fill="none" stroke="#dcdcdc" stroke-width="0.8"/></svg>
<!-- formula bar -->
<div class="a" style="left:3.0px;top:100.0px;width:60.0px;height:15.0px;background:#2d2d2d;"></div>
<div class="a" style="left:7.0px;top:103.88px;font-size:7.4px;color:#e6e6e6;">Table4</div>
<div class="a" style="left:54.5px;top:106.3px;width:0;height:0;border-left:2.2px solid transparent;border-right:2.2px solid transparent;border-top:2.6px solid #f0f0f0"></div>
<div class="a" style="left:70.8px;top:104.6px;width:1.0px;height:1.0px;background:#d0d0d0;"></div>
<div class="a" style="left:70.8px;top:107.2px;width:1.0px;height:1.0px;background:#d0d0d0;"></div>
<div class="a" style="left:70.8px;top:109.8px;width:1.0px;height:1.0px;background:#d0d0d0;"></div>
<div class="a" style="left:80.0px;top:100.0px;width:65.0px;height:15.0px;background:#2d2d2d;"></div>
<svg class="a" style="left:88.2px;top:104.8px" width="6.4" height="6.4" viewBox="0 0 6.4 6.4"><path d="M0.5 0.5L5.9 5.9M5.9 0.5L0.5 5.9" stroke="#6a6a6a" stroke-width="0.8"/></svg>
<svg class="a" style="left:109.0px;top:104.8px" width="8" height="6.4" viewBox="0 0 8 6.4"><path d="M0.6 3.6L2.8 5.8L7.4 0.6" fill="none" stroke="#6a6a6a" stroke-width="0.8"/></svg>
<div class="a" style="left:130.8px;top:103.36px;font-size:8.0px;color:#e6e6e6;font-style:italic;font-family:'Liberation Serif',serif">f</div>
<div class="a" style="left:133.8px;top:106.55px;font-size:5.0px;color:#e6e6e6;font-style:italic;font-family:'Liberation Serif',serif">x</div>
<div class="a" style="left:147.0px;top:100.0px;width:650.0px;height:15.0px;background:#2d2d2d;"></div>
<div class="a" style="left:153.5px;top:104.18px;font-size:7.2px;color:#f0f0f0;">=ROW(A8)-7</div>
<svg class="a" style="left:789.5px;top:105.6px" width="5" height="4" viewBox="0 0 5 4"><path d="M0.5 0.7L2.5 2.9L4.5 0.7" fill="none" stroke="#f0f0f0" stroke-width="0.9"/></svg>
<!-- ================= GRID ================= -->
<div id="colhdr" class="a"></div>
<div id="rowhdr" class="a"></div>
<div id="sheet" class="a"></div>
<!-- column headers -->
<div class="a" style="left:6px;top:124px;width:0;height:0;border-left:6px solid transparent;border-bottom:6px solid #5c5c5c"></div>
<div class="a ch" style="left:15px;width:51px;background:#6b6b6b;color:#fff;border-bottom:1px solid #1e7145;border-right:1px solid #9a9a9a;">A</div>
<div class="a ch" style="left:66px;width:61px;">B</div>
<div class="a ch" style="left:127px;width:95px;">C</div>
<div class="a ch" style="left:222px;width:71px;">D</div>
<div class="a ch" style="left:293px;width:60px;">E</div>
<div class="a ch" style="left:353px;width:60px;">F</div>
<div class="a ch" style="left:413px;width:60.5px;">G</div>
<div class="a ch" style="left:473.5px;width:72.5px;">H</div>
<div class="a ch" style="left:546px;width:84px;">I</div>
<div class="a ch" style="left:630px;width:16.5px;">J</div>
<div class="a ch" style="left:646.5px;width:52.1px;">K</div>
<div class="a ch" style="left:698.6px;width:34px;">L</div>
<div class="a ch" style="left:732.6px;width:34px;">M</div>
<div class="a ch" style="left:766.6px;width:34px;border-right:0;">N</div>
<!-- vertical scrollbar -->
<div class="a" style="left:788px;top:120px;width:12px;height:283px;background:#262626"></div>
<div class="a" style="left:790px;top:122px;width:8px;height:9px;background:#4d4d4d"></div>
<div class="a" style="left:792px;top:125px;width:0;height:0;border-left:2px solid transparent;border-right:2px solid transparent;border-bottom:2.5px solid #e6e6e6"></div>
<div class="a" style="left:790px;top:132px;width:8px;height:9px;background:#4d4d4d"></div>
<div class="a" style="left:790px;top:393px;width:8px;height:9px;background:#4d4d4d"></div>
<div class="a" style="left:792px;top:396.5px;width:0;height:0;border-left:2px solid transparent;border-right:2px solid transparent;border-top:2.5px solid #e6e6e6"></div>
<!-- row headers -->
<div class="a rh" style="top:131px;height:17px;"><span class="a" style="left:0;width:15px;bottom:1px;text-align:center">3</span></div>
<div class="a rh" style="top:148px;height:21.5px;"><span class="a" style="left:0;width:15px;bottom:1px;text-align:center">4</span></div>
<div class="a rh" style="top:169.5px;height:25.0px;"><span class="a" style="left:0;width:15px;bottom:1px;text-align:center">5</span></div>
<div class="a rh" style="top:194.5px;height:20.5px;"><span class="a" style="left:0;width:15px;bottom:1px;text-align:center">6</span></div>
<div class="a rh" style="top:215px;height:34px;"><span class="a" style="left:0;width:15px;bottom:1px;text-align:center">7</span></div>
<div class="a rh" style="top:249px;height:13.5px;background:#5e5e5e;color:#fff;border-right:1px solid #1e7145;border-bottom-color:#777;"><span class="a" style="left:0;width:15px;bottom:1px;text-align:center">8</span></div>
<div class="a rh" style="top:262.5px;height:13.5px;background:#5e5e5e;color:#fff;border-right:1px solid #1e7145;border-bottom-color:#777;"><span class="a" style="left:0;width:15px;bottom:1px;text-align:center">9</span></div>
<div class="a rh" style="top:276px;height:13.5px;background:#5e5e5e;color:#fff;border-right:1px solid #1e7145;border-bottom-color:#777;"><span class="a" style="left:0;width:15px;bottom:1px;text-align:center">10</span></div>
<div class="a rh" style="top:289.5px;height:13.5px;background:#5e5e5e;color:#fff;border-right:1px solid #1e7145;border-bottom-color:#777;"><span class="a" style="left:0;width:15px;bottom:1px;text-align:center">11</span></div>
<div class="a rh" style="top:303px;height:13.5px;"><span class="a" style="left:0;width:15px;bottom:1px;text-align:center">12</span></div>
<div class="a rh" style="top:316.5px;height:13.5px;"><span class="a" style="left:0;width:15px;bottom:1px;text-align:center">13</span></div>
<div class="a rh" style="top:330px;height:13.5px;"><span class="a" style="left:0;width:15px;bottom:1px;text-align:center">14</span></div>
<div class="a rh" style="top:343.5px;height:13.5px;"><span class="a" style="left:0;width:15px;bottom:1px;text-align:center">15</span></div>
<div class="a rh" style="top:357px;height:13.5px;"><span class="a" style="left:0;width:15px;bottom:1px;text-align:center">16</span></div>
<div class="a rh" style="top:370.5px;height:13.5px;"><span class="a" style="left:0;width:15px;bottom:1px;text-align:center">17</span></div>
<div class="a rh" style="top:384px;height:13.5px;"><span class="a" style="left:0;width:15px;bottom:1px;text-align:center">18</span></div>



<!-- sheet content -->
<div class="a" style="left:15px;top:131px;width:615px;height:17px;background:#a96ed6"></div>
<div class="a th" style="left:15px;width:51px;padding-top:7px;line-height:9.5px;border-left:0;">คิวเข้ารับ<br>อาหาร<i class="dd"></i></div>
<div class="a th" style="left:66px;width:61px;padding-top:14px;">วันที่<i class="dd"></i></div>
<div class="a th" style="left:127px;width:95px;padding-top:14px;">ฟาร์ม<i class="dd"></i></div>
<div class="a th" style="left:222px;width:71px;padding-top:14px;">รถขนส่ง<i class="dd"></i></div>
<div class="a th" style="left:293px;width:60px;padding-top:14px;">ทะเบียนรถ<i class="dd"></i></div>
<div class="a th" style="left:353px;width:60px;padding-top:14px;">สินค้า<i class="dd"></i></div>
<div class="a th" style="left:413px;width:60.5px;padding-top:14px;">จำนวน (ตัน)<i class="dd"></i></div>
<div class="a th" style="left:473.5px;width:72.5px;padding-top:7px;line-height:9.5px;">ระดับความ<br>ต้องการอาหาร<i class="dd"></i></div>
<div class="a th" style="left:546px;width:84px;padding-top:14px;">สถานะรถ<i class="dd"></i></div>
<div class="a td bl" style="left:15px;top:249px;width:51px;height:13.5px;border-left:0;">1</div>
<div class="a td bl" style="left:66px;top:249px;width:61px;height:13.5px;"></div>
<div class="a td bl" style="left:127px;top:249px;width:95px;height:13.5px;">C</div>
<div class="a td bl" style="left:222px;top:249px;width:71px;height:13.5px;">Trailer</div>
<div class="a td bl" style="left:293px;top:249px;width:60px;height:13.5px;"></div>
<div class="a td bl" style="left:353px;top:249px;width:60px;height:13.5px;"></div>
<div class="a td bl" style="left:413px;top:249px;width:60.5px;height:13.5px;"></div>
<div class="a td bl" style="left:473.5px;top:249px;width:72.5px;height:13.5px;">10</div>
<div class="a td bl" style="left:546px;top:249px;width:84px;height:13.5px;"></div>
<div class="a td wh" style="left:15px;top:262.5px;width:51px;height:13.5px;border-left:0;">2</div>
<div class="a td wh" style="left:66px;top:262.5px;width:61px;height:13.5px;"></div>
<div class="a td wh" style="left:127px;top:262.5px;width:95px;height:13.5px;">E</div>
<div class="a td wh" style="left:222px;top:262.5px;width:71px;height:13.5px;">Trailer</div>
<div class="a td wh" style="left:293px;top:262.5px;width:60px;height:13.5px;"></div>
<div class="a td wh" style="left:353px;top:262.5px;width:60px;height:13.5px;"></div>
<div class="a td wh" style="left:413px;top:262.5px;width:60.5px;height:13.5px;"></div>
<div class="a td wh" style="left:473.5px;top:262.5px;width:72.5px;height:13.5px;">10</div>
<div class="a td wh" style="left:546px;top:262.5px;width:84px;height:13.5px;"></div>
<div class="a td bl" style="left:15px;top:276px;width:51px;height:13.5px;border-left:0;">3</div>
<div class="a td bl" style="left:66px;top:276px;width:61px;height:13.5px;"></div>
<div class="a td bl" style="left:127px;top:276px;width:95px;height:13.5px;">F</div>
<div class="a td bl" style="left:222px;top:276px;width:71px;height:13.5px;">Truck</div>
<div class="a td bl" style="left:293px;top:276px;width:60px;height:13.5px;"></div>
<div class="a td bl" style="left:353px;top:276px;width:60px;height:13.5px;"></div>
<div class="a td bl" style="left:413px;top:276px;width:60.5px;height:13.5px;"></div>
<div class="a td bl" style="left:473.5px;top:276px;width:72.5px;height:13.5px;">15</div>
<div class="a td bl" style="left:546px;top:276px;width:84px;height:13.5px;"></div>
<div class="a td wh" style="left:15px;top:289.5px;width:51px;height:13.5px;border-left:0;">4</div>
<div class="a td wh" style="left:66px;top:289.5px;width:61px;height:13.5px;"></div>
<div class="a td wh" style="left:127px;top:289.5px;width:95px;height:13.5px;">D</div>
<div class="a td wh" style="left:222px;top:289.5px;width:71px;height:13.5px;">Truck</div>
<div class="a td wh" style="left:293px;top:289.5px;width:60px;height:13.5px;"></div>
<div class="a td wh" style="left:353px;top:289.5px;width:60px;height:13.5px;"></div>
<div class="a td wh" style="left:413px;top:289.5px;width:60.5px;height:13.5px;"></div>
<div class="a td wh" style="left:473.5px;top:289.5px;width:72.5px;height:13.5px;">12</div>
<div class="a td wh" style="left:546px;top:289.5px;width:84px;height:13.5px;"></div>
<div class="a" style="left:15px;top:303px;width:615px;height:1px;background:#5a5a5a"></div>
<div class="a" style="left:629.5px;top:215px;width:1px;height:89px;background:#444"></div>
<div class="a" style="left:626px;top:300px;width:0;height:0;border-left:3px solid transparent;border-bottom:3px solid #2f5597"></div>
<div class="a" style="left:16px;top:263px;width:50px;height:13px;background:#c8c8c8;mix-blend-mode:multiply"></div>
<div class="a" style="left:16px;top:276.5px;width:50px;height:13px;background:#c3c3c3;mix-blend-mode:multiply"></div>
<div class="a" style="left:16px;top:290px;width:50px;height:12.5px;background:#c8c8c8;mix-blend-mode:multiply"></div>
<div class="a" style="left:15px;top:249px;width:52px;height:54.5px;border:1px solid #1e7145"></div>
<div class="a" style="left:65px;top:302px;width:3px;height:3px;background:#1e7145;outline:0.5px solid #fff"></div>
<div class="a c" style="left:564.5px;top:192px;width:55.5px;height:19.5px;border-radius:3px;background:linear-gradient(#f4904a,#ea6c15);box-shadow:0.5px 1px 2px rgba(0,0,0,.45);color:#fff;font-weight:bold;font-size:6.5px;line-height:19px;overflow:hidden">เพิ่มข้อมูล</div>

<!-- ================= DIALOGS ================= -->
<div class="a" style="left:296px;top:91px;width:208px;height:246px;background:#c0c0ff;box-shadow:0 1px 4px rgba(0,0,0,.35)"></div>
<div class="a" style="left:296px;top:91px;width:208px;height:13px;background:#fff"></div>
<div class="a" style="left:302.0px;top:95.50px;font-size:6.3px;color:#a0a0a0">UserForm1</div>
<svg class="a" style="left:491px;top:96px" width="7" height="7" viewBox="0 0 7 7"><path d="M0.5 0.5L6.5 6.5M6.5 0.5L0.5 6.5" stroke="#8a8a8a" stroke-width="0.8" fill="none"/></svg>
<div class="a lbl" style="top:216px">รถขนส่ง</div>
<div class="a lbl" style="top:235px">ทะเบียนรถ</div>
<div class="a lbl" style="top:258px">สินค้า</div>
<div class="a lbl" style="top:282px;font-size:6px">จำนวน (ตัน)</div>
<div class="a tb" style="top:207px;height:19px"></div>
<div class="a" style="left:478px;top:208px;width:9px;height:17px;background:#e4e4e4;border:1px solid #fff;border-right-color:#777;border-bottom-color:#777"></div>
<div class="a tb" style="top:230px;height:19.5px"></div>
<div class="a tb" style="top:254px;height:19.5px;padding:5.8px 0 0 7px;font-size:6.3px">001B</div>
<div class="a" style="left:478px;top:255px;width:9px;height:17.5px;background:#e4e4e4;border:1px solid #fff;border-right-color:#666;border-bottom-color:#666"></div>
<div class="a" style="left:480.5px;top:263px;width:0;height:0;border-left:2px solid transparent;border-right:2px solid transparent;border-top:2.5px solid #000"></div>
<div class="a tb" style="top:282px;height:19.5px;padding:6px 0 0 7px;font-size:6.6px">10</div>
<div class="a fb" style="left:301px;width:56px">Cancel</div>
<div class="a fb" style="left:376px;width:56px">Clear</div>
<div class="a fb" style="left:441px;width:57px;border:1px solid #555;border-right:1.5px solid #111;border-bottom:1.5px solid #111;box-shadow:inset 1px 1px 0 #fff">Add</div>
<div class="a" style="left:292.4px;top:102px;width:214.6px;height:121.5px;background:#f0f0f0;border:1px solid #8f8f8f;box-shadow:0 2.5px 6px rgba(0,0,0,.55)"></div>
<div class="a" style="left:293.4px;top:103px;width:212.6px;height:16.8px;background:#fff"></div>
<div class="a" style="left:297.5px;top:107.50px;font-size:7.0px;color:#000">Microsoft Visual Basic</div>
<div class="a" style="left:299.5px;top:130.00px;font-size:6.2px;color:#000">Run-time error '-2147417848 (80010108)':</div>
<div class="a" style="left:299.5px;top:145.00px;font-size:6.2px;color:#000">Method 'Add' of object 'ListRows' failed</div>
<div class="a mb" style="left:300px;background:#cfcfcf;border-color:#bdbdbd;color:#8f8f8f">Continue</div>
<div class="a mb" style="left:351px">End</div>
<div class="a mb" style="left:403.5px;border:1px solid #0078d7;box-shadow:inset 0 0 0 0.5px #0078d7">Debug</div>
<div class="a mb" style="left:455px">Help</div>
<!-- ================= BOTTOM ================= -->
<div id="sheettabs" class="a"></div>
<div id="status" class="a"></div>
<div id="taskbar" class="a"></div>
<!-- bottom content -->
<div class="a" style="left:15.6px;top:409px;width:0;height:0;border-top:2.2px solid transparent;border-bottom:2.2px solid transparent;border-right:2.6px solid #8a8a8a"></div>
<div class="a" style="left:32.4px;top:409px;width:0;height:0;border-top:2.2px solid transparent;border-bottom:2.2px solid transparent;border-left:2.6px solid #8a8a8a"></div>
<div class="a c" style="left:59px;top:403px;width:30.5px;height:14.2px;background:linear-gradient(#d9c6f0,#f4eefb);border-bottom:1.2px solid #1e7145;color:#1e7145;font-weight:bold;font-size:7.6px;line-height:15px">Data</div>
<svg class="a" style="left:109.0px;top:407.0px" width="9.4" height="9.4" viewBox="0 0 9.4 9.4"><circle cx="4.7" cy="4.7" r="3.9" fill="none" stroke="#f0f0f0" stroke-width="0.8"/><path d="M4.7 2.4V7M2.4 4.7H7" stroke="#f0f0f0" stroke-width="0.8"/></svg>
<div class="a" style="left:479.6px;top:408.2px;width:1.0px;height:1.0px;background:#d0d0d0;"></div>
<div class="a" style="left:479.6px;top:410.6px;width:1.0px;height:1.0px;background:#d0d0d0;"></div>
<div class="a" style="left:479.6px;top:413.0px;width:1.0px;height:1.0px;background:#d0d0d0;"></div>
<div class="a" style="left:489.5px;top:407.3px;width:298.0px;height:8.3px;background:#333;"></div>
<div class="a" style="left:489.5px;top:407.3px;width:8.5px;height:8.3px;background:#5a5a5a;"></div>
<div class="a" style="left:492.2px;top:409.4px;width:0;height:0;border-top:2.1px solid transparent;border-bottom:2.1px solid transparent;border-right:2.6px solid #f0f0f0"></div>
<div class="a" style="left:498.8px;top:407.3px;width:267.0px;height:8.3px;background:#4d4d4d;"></div>
<div class="a" style="left:779.0px;top:407.3px;width:8.5px;height:8.3px;background:#5a5a5a;"></div>
<div class="a" style="left:782.2px;top:409.4px;width:0;height:0;border-top:2.1px solid transparent;border-bottom:2.1px solid transparent;border-left:2.6px solid #f0f0f0"></div>
<div class="a" style="left:4.6px;top:422.81px;font-size:6.4px;color:#e6e6e6;">Ready</div>
<svg class="a" style="left:33.8px;top:422.2px" width="8.4" height="8" viewBox="0 0 8.4 8"><rect x="0.5" y="0.5" width="7.4" height="7" fill="none" stroke="#dcdcdc" stroke-width="0.7"/><path d="M0.5 2.6H7.9" stroke="#dcdcdc" stroke-width="0.7"/><rect x="1.8" y="3.8" width="2" height="2.6" fill="none" stroke="#dcdcdc" stroke-width="0.6"/><circle cx="5.8" cy="5.2" r="1.1" fill="none" stroke="#dcdcdc" stroke-width="0.6"/></svg>
<svg class="a" style="left:52.8px;top:422.0px" width="8" height="8.6" viewBox="0 0 8 8.6"><circle cx="3" cy="1.4" r="1" fill="none" stroke="#dcdcdc" stroke-width="0.7"/><path d="M0.4 3H5.6M3 3V5.4M3 5.4L1.2 8M3 5.4L4.6 7" stroke="#dcdcdc" stroke-width="0.7" fill="none"/><path d="M4.8 6L6 7.2L7.8 4.6" stroke="#dcdcdc" stroke-width="0.7" fill="none"/></svg>
<div class="a" style="left:62.6px;top:422.65px;font-size:6.7px;color:#f0f0f0;">Accessibility: Good to go</div>
<div class="a" style="left:512.0px;top:422.75px;font-size:6.5px;color:#e6e6e6;">Average: 2.5</div>
<div class="a" style="left:558.3px;top:422.75px;font-size:6.5px;color:#e6e6e6;">Count: 4</div>
<div class="a" style="left:593.0px;top:422.75px;font-size:6.5px;color:#e6e6e6;">Sum: 10</div>
<div class="a" style="left:628.0px;top:420.0px;width:23.3px;height:12.5px;background:#565656;"></div>
<svg class="a" style="left:636.0px;top:422.4px" width="8" height="7.6" viewBox="0 0 8 7.6"><rect x="0.5" y="0.5" width="7" height="6.6" fill="none" stroke="#f0f0f0" stroke-width="0.7"/><path d="M0.5 2.7H7.5M0.5 4.9H7.5M2.9 0.5V7.1M5.3 0.5V7.1" stroke="#f0f0f0" stroke-width="0.6"/></svg>
<svg class="a" style="left:659.0px;top:422.4px" width="8" height="7.6" viewBox="0 0 8 7.6"><rect x="0.5" y="0.5" width="7" height="6.6" fill="none" stroke="#dcdcdc" stroke-width="0.7"/><rect x="2.2" y="1.6" width="3.6" height="4.4" fill="#8a8a8a" stroke="#dcdcdc" stroke-width="0.5"/></svg>
<svg class="a" style="left:682.4px;top:422.4px" width="8" height="7.6" viewBox="0 0 8 7.6"><rect x="0.5" y="0.5" width="7" height="6.6" fill="none" stroke="#dcdcdc" stroke-width="0.7"/><path d="M0.5 4.4H4.4V0.5" stroke="#dcdcdc" stroke-width="0.7" fill="none"/></svg>
<div class="a" style="left:702.4px;top:426.0px;width:3.8px;height:0.7px;background:#dcdcdc;"></div>
<div class="a" style="left:709.3px;top:426.0px;width:58.7px;height:0.7px;background:#bdbdbd;"></div>
<div class="a" style="left:735.0px;top:422.8px;width:1.8px;height:7.2px;background:#f0f0f0;"></div>
<div class="a" style="left:738.4px;top:424.6px;width:0.6px;height:3.6px;background:#bdbdbd;"></div>
<div class="a" style="left:770.4px;top:426.0px;width:4.2px;height:0.7px;background:#dcdcdc;"></div>
<div class="a" style="left:772.1px;top:424.3px;width:0.7px;height:4.2px;background:#dcdcdc;"></div>
<div class="a" style="left:783.2px;top:422.91px;font-size:6.2px;color:#e6e6e6;">90%</div>
<svg class="a" style="left:6.0px;top:436.6px" width="9.4" height="9.4" viewBox="0 0 9.4 9.4"><rect x="0" y="0" width="4.3" height="4.3" fill="#fff"/><rect x="5.1" y="0" width="4.3" height="4.3" fill="#fff"/><rect x="0" y="5.1" width="4.3" height="4.3" fill="#fff"/><rect x="5.1" y="5.1" width="4.3" height="4.3" fill="#fff"/></svg>
<svg class="a" style="left:26.6px;top:436.2px" width="10" height="10" viewBox="0 0 10 10"><circle cx="6" cy="3.8" r="3" fill="none" stroke="#f0f0f0" stroke-width="0.9"/><path d="M3.8 6L0.8 9.2" stroke="#f0f0f0" stroke-width="0.9"/></svg>
<svg class="a" style="left:50.0px;top:436.0px" width="9" height="10.5" viewBox="0 0 9 10.5"><circle cx="4.6" cy="5.6" r="3.8" fill="#c64a1c"/><path d="M3 0.6V10M3 5L6.4 2.2M3 5L6.8 8.6" stroke="#3a8ee6" stroke-width="1.1" fill="none"/></svg>
<svg class="a" style="left:71.0px;top:436.4px" width="9.6" height="9.6" viewBox="0 0 9.6 9.6"><circle cx="4.8" cy="4.8" r="4.4" fill="#1a86d8"/><path d="M1 6C1.6 2.6 5.6 1.4 8.6 3.8C7 3 4.6 3.4 4.2 5.4C4 7.2 6 8.4 8 7.4C6.4 9.6 2 9.4 1 6Z" fill="#4fd1a1"/><circle cx="6.2" cy="5.2" r="1.4" fill="#cfe8ff"/></svg>
<svg class="a" style="left:92.6px;top:436.4px" width="9.4" height="9.6" viewBox="0 0 9.4 9.6"><rect x="0.4" y="2" width="8.6" height="7.2" rx="0.8" fill="#f4f4f4"/><path d="M2.8 2V0.8H6.6V2" stroke="#f4f4f4" stroke-width="0.8" fill="none"/><rect x="2.2" y="3.4" width="2.2" height="2.2" fill="#e8453c"/><rect x="5" y="3.4" width="2.2" height="2.2" fill="#4caf50"/><rect x="2.2" y="6.2" width="2.2" height="2.2" fill="#2f7bd9"/><rect x="5" y="6.2" width="2.2" height="2.2" fill="#fbbc05"/></svg>
<svg class="a" style="left:114.6px;top:437.0px" width="10" height="8.6" viewBox="0 0 10 8.6"><path d="M0.4 0.6H4L5 1.8H9.6V8.2H0.4Z" fill="#f5c542"/><rect x="0.4" y="3.2" width="9.2" height="5" fill="#fbd96a"/><rect x="3" y="5" width="4" height="3.2" fill="#3a8ee6"/></svg>
<svg class="a" style="left:136.4px;top:436.6px" width="9.4" height="9.4" viewBox="0 0 9.4 9.4"><circle cx="4.7" cy="4.7" r="4.5" fill="#db4437"/><path d="M4.7 4.7L0.8 2.4A4.5 4.5 0 0 0 4.7 9.2Z" fill="#0f9d58"/><path d="M4.7 4.7L4.7 9.2A4.5 4.5 0 0 0 8.6 2.4Z" fill="#ffcd40"/><circle cx="4.7" cy="4.7" r="2.1" fill="#fff"/><circle cx="4.7" cy="4.7" r="1.6" fill="#4285f4"/></svg>
<svg class="a" style="left:158.0px;top:436.8px" width="9.4" height="9" viewBox="0 0 9.4 9"><rect x="0.2" y="0.2" width="9" height="8.6" rx="1" fill="#d12c3a"/><rect x="1.6" y="2.6" width="6.2" height="4.4" rx="0.6" fill="none" stroke="#fff" stroke-width="0.8"/><circle cx="4.7" cy="4.8" r="1.2" fill="#fff"/></svg>
<div class="a" style="left:174.0px;top:433.0px;width:21.0px;height:17.0px;background:#3c3c3c;"></div>
<svg class="a" style="left:179.6px;top:436.6px" width="10" height="9.4" viewBox="0 0 10 9.4"><rect x="2.6" y="0.4" width="7.2" height="8.6" rx="0.6" fill="#21a366"/><rect x="6.2" y="0.4" width="3.6" height="4.3" fill="#33c481"/><rect x="2.6" y="4.7" width="3.6" height="4.3" fill="#107c41"/><rect x="0.2" y="2.2" width="5.4" height="5.4" rx="0.5" fill="#0e6b37"/><path d="M1.6 3.4L4.2 6.4M4.2 3.4L1.6 6.4" stroke="#fff" stroke-width="0.8"/></svg>
<div class="a" style="left:111.0px;top:448.6px;width:17.5px;height:1.4px;background:#c2a6ec;"></div>
<div class="a" style="left:133.0px;top:448.6px;width:16.5px;height:1.4px;background:#c2a6ec;"></div>
<div class="a" style="left:155.0px;top:448.6px;width:16.5px;height:1.4px;background:#c2a6ec;"></div>
<div class="a" style="left:174.0px;top:448.6px;width:21.0px;height:1.4px;background:#c2a6ec;"></div>
<svg class="a" style="left:585.0px;top:434.0px" width="15" height="14" viewBox="0 0 15 14"><path d="M8.4 1.6A5.8 5.8 0 1 0 13.6 9.6A4.8 4.8 0 0 1 8.4 1.6Z" fill="#f5b921"/><path d="M0.8 5.6C0.8 4 2.4 3.4 3.4 3.8C4 2 7 2 7.6 4C9.2 4 9.4 6.4 7.8 6.6H1.8C1 6.6 0.8 6.2 0.8 5.6Z" fill="#e6edf5"/></svg>
<div class="a" style="left:604.0px;top:437.78px;font-size:7.2px;color:#f0f0f0;">28°C</div>
<div class="a" style="left:626px;top:437.4px;width:43px;height:8px;overflow:hidden;font-size:5.3px;line-height:8px;color:#f0f0f0">แดดโดยส่วนใ...</div>
<svg class="a" style="left:672.0px;top:439.4px" width="7.4" height="4.6" viewBox="0 0 7.4 4.6"><path d="M0.6 4L3.7 0.8L6.8 4" fill="none" stroke="#f0f0f0" stroke-width="0.8"/></svg>
<svg class="a" style="left:686.4px;top:437.6px" width="8" height="8" viewBox="0 0 8 8"><path d="M0.6 7.4A6.8 6.8 0 0 1 7.4 0.8" fill="none" stroke="#bdbdbd" stroke-width="0.8"/><path d="M2.4 7.4A5 5 0 0 1 7.4 2.6" fill="none" stroke="#f0f0f0" stroke-width="0.8"/><path d="M4.2 7.4A3.2 3.2 0 0 1 7.4 4.4" fill="none" stroke="#f0f0f0" stroke-width="0.8"/><circle cx="6.6" cy="6.8" r="0.8" fill="#f0f0f0"/></svg>
<svg class="a" style="left:698.0px;top:437.6px" width="10" height="8" viewBox="0 0 10 8"><path d="M0.6 2.8H2.2L4.4 0.8V7.2L2.2 5.2H0.6Z" fill="none" stroke="#f0f0f0" stroke-width="0.7"/><path d="M6 2.6L8.8 5.4M8.8 2.6L6 5.4" stroke="#f0f0f0" stroke-width="0.7"/></svg>
<svg class="a" style="left:714.0px;top:436.6px" width="9" height="10" viewBox="0 0 9 10"><rect x="1" y="3" width="5.6" height="5" rx="1" fill="none" stroke="#f0f0f0" stroke-width="0.7"/><path d="M6.6 4.8L8.4 3.8V7.2L6.6 6.2" fill="none" stroke="#f0f0f0" stroke-width="0.7"/><path d="M2.2 3C2.2 0.8 5.4 0.8 5.4 3M1.6 9.4H6" stroke="#f0f0f0" stroke-width="0.7" fill="none"/></svg>
<div class="a" style="left:728.6px;top:438.70px;font-size:6.6px;color:#f0f0f0;">ENG</div>
<div class="a" style="left:750.0px;top:438.70px;font-size:6.6px;color:#f0f0f0;">12:17</div>
<svg class="a" style="left:776.0px;top:437.0px" width="9" height="9" viewBox="0 0 9 9"><path d="M0.4 0.4H8.6V6.4H5.4L4 8.4V6.4H0.4Z" fill="#f0f0f0"/><path d="M1.8 2.2H7.2M1.8 3.8H7.2" stroke="#1c1c1c" stroke-width="0.6"/></svg>
</body>
</html>
